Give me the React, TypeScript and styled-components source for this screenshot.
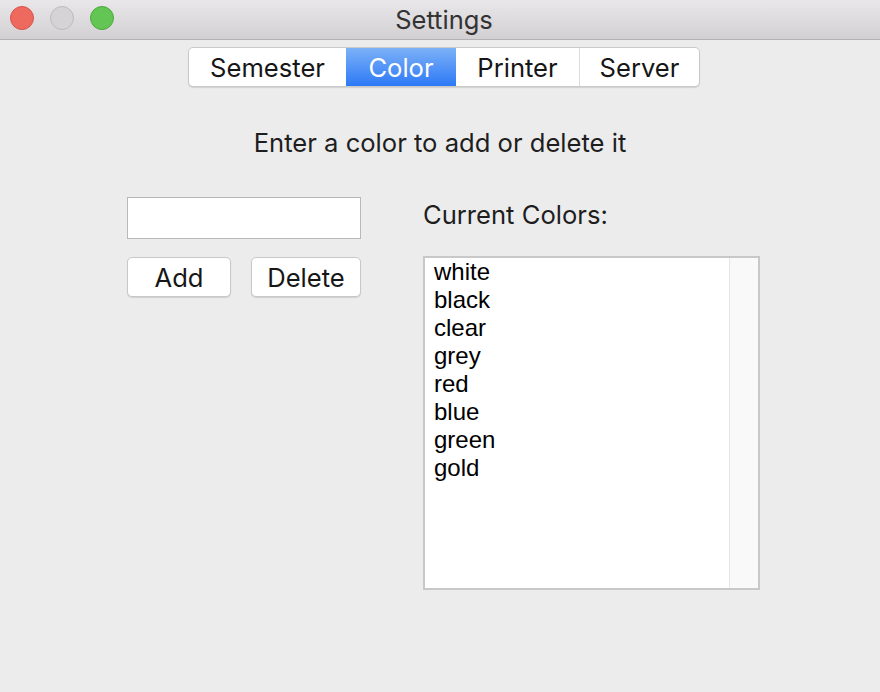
import React from "react";
import styled, { createGlobalStyle } from "styled-components";

const Global = createGlobalStyle`
  html, body { margin: 0; padding: 0; }
  body { width: 880px; height: 692px; overflow: hidden; background: #ececec; font-family: "Inter", "Liberation Sans", sans-serif; }
`;

const Window = styled.div`
  width: 880px;
  height: 692px;
  display: flex;
  flex-direction: column;
  background: #ececec;
`;

const TitleBar = styled.div`
  height: 40px;
  flex: none;
  position: relative;
  display: flex;
  align-items: center;
  justify-content: center;
  padding-left: 8px;
  box-sizing: border-box;
  background: linear-gradient(#e9e7e9, #d2d0d2);
  border-bottom: 1px solid #b4b2b4;
`;

const Lights = styled.div`
  position: absolute;
  left: 10px;
  top: 6px;
  display: flex;
  gap: 16px;
`;

const Light = styled.div<{ $c: string; $b: string }>`
  width: 22px;
  height: 22px;
  border-radius: 50%;
  background: ${(p) => p.$c};
  border: 1px solid ${(p) => p.$b};
`;

const Title = styled.div`
  font-size: 25.5px;
  line-height: 30px;
  color: #333;
`;

const Content = styled.div`
  flex: 1;
  display: flex;
  flex-direction: column;
  align-items: center;
  padding-top: 7px;
`;

const Segmented = styled.div`
  display: flex;
  height: 38px;
  margin-left: 8px;
  background: #fff;
  border: 1px solid #c9c9c9;
  border-radius: 5px;
  box-shadow: 0 1px 1px rgba(0, 0, 0, 0.12);
  overflow: hidden;
`;

const Segment = styled.div<{ $w: number; $active?: boolean; $sep?: boolean }>`
  width: ${(p) => p.$w}px;
  display: flex;
  align-items: center;
  justify-content: center;
  font-size: 25.6px;
  color: ${(p) => (p.$active ? "#fff" : "#161616")};
  background: ${(p) => (p.$active ? "linear-gradient(#7cb1f7, #2d79f6)" : "transparent")};
  border-left: ${(p) => (p.$sep ? "1px solid #dcdcdc" : "none")};
`;

const Prompt = styled.div`
  margin-top: 41px;
  font-size: 25.6px;
  line-height: 30px;
  color: #1e1e1e;
`;

const Columns = styled.div`
  align-self: stretch;
  display: flex;
  padding-left: 127px;
  margin-top: 39px;
  gap: 62px;
`;

const LeftCol = styled.div`
  display: flex;
  flex-direction: column;
  width: 234px;
`;

const TextField = styled.div`
  height: 42px;
  background: #fff;
  border: 1px solid #b9b9b9;
  box-sizing: border-box;
`;

const ButtonRow = styled.div`
  display: flex;
  justify-content: space-between;
  margin-top: 18px;
`;

const Button = styled.div<{ $w: number }>`
  width: ${(p) => p.$w}px;
  height: 40px;
  box-sizing: border-box;
  display: flex;
  align-items: center;
  justify-content: center;
  background: #fff;
  border: 1px solid #c8c8c8;
  border-radius: 5px;
  box-shadow: 0 1px 1px rgba(0, 0, 0, 0.12);
  font-size: 25.6px;
  color: #161616;
`;

const RightCol = styled.div`
  display: flex;
  flex-direction: column;
`;

const Label = styled.div`
  font-size: 25.6px;
  color: #1e1e1e;
  height: 36px;
  line-height: 36px;
`;

const ListBox = styled.div`
  margin-top: 23px;
  width: 337px;
  height: 334px;
  box-sizing: border-box;
  border: 2px solid #c8c8c8;
  display: flex;
  background: #fff;
`;

const ListItems = styled.div`
  flex: 1;
  padding: 0 0 0 9px;
`;

const Item = styled.div`
  font-family: "Liberation Sans", Arial, sans-serif;
  font-size: 24px;
  line-height: 28px;
  color: #000;
`;

const Track = styled.div`
  width: 28px;
  background: #f9f9f9;
  border-left: 1px solid #e6e6e6;
`;

const colors = ["white", "black", "clear", "grey", "red", "blue", "green", "gold"];

export default function App() {
  return (
    <Window>
      <Global />
      <TitleBar>
        <Lights>
          <Light $c="#ee6a5f" $b="#d8544a" />
          <Light $c="#d5d3d5" $b="#bdbbbd" />
          <Light $c="#62c554" $b="#4ea93f" />
        </Lights>
        <Title>Settings</Title>
      </TitleBar>
      <Content>
        <Segmented>
          <Segment $w={157}>Semester</Segment>
          <Segment $w={110} $active>Color</Segment>
          <Segment $w={123}>Printer</Segment>
          <Segment $w={119} $sep>Server</Segment>
        </Segmented>
        <Prompt>Enter a color to add or delete it</Prompt>
        <Columns>
          <LeftCol>
            <TextField />
            <ButtonRow>
              <Button $w={104}>Add</Button>
              <Button $w={110}>Delete</Button>
            </ButtonRow>
          </LeftCol>
          <RightCol>
            <Label>Current Colors:</Label>
            <ListBox>
              <ListItems>
                {colors.map((c) => (
                  <Item key={c}>{c}</Item>
                ))}
              </ListItems>
              <Track />
            </ListBox>
          </RightCol>
        </Columns>
      </Content>
    </Window>
  );
}
